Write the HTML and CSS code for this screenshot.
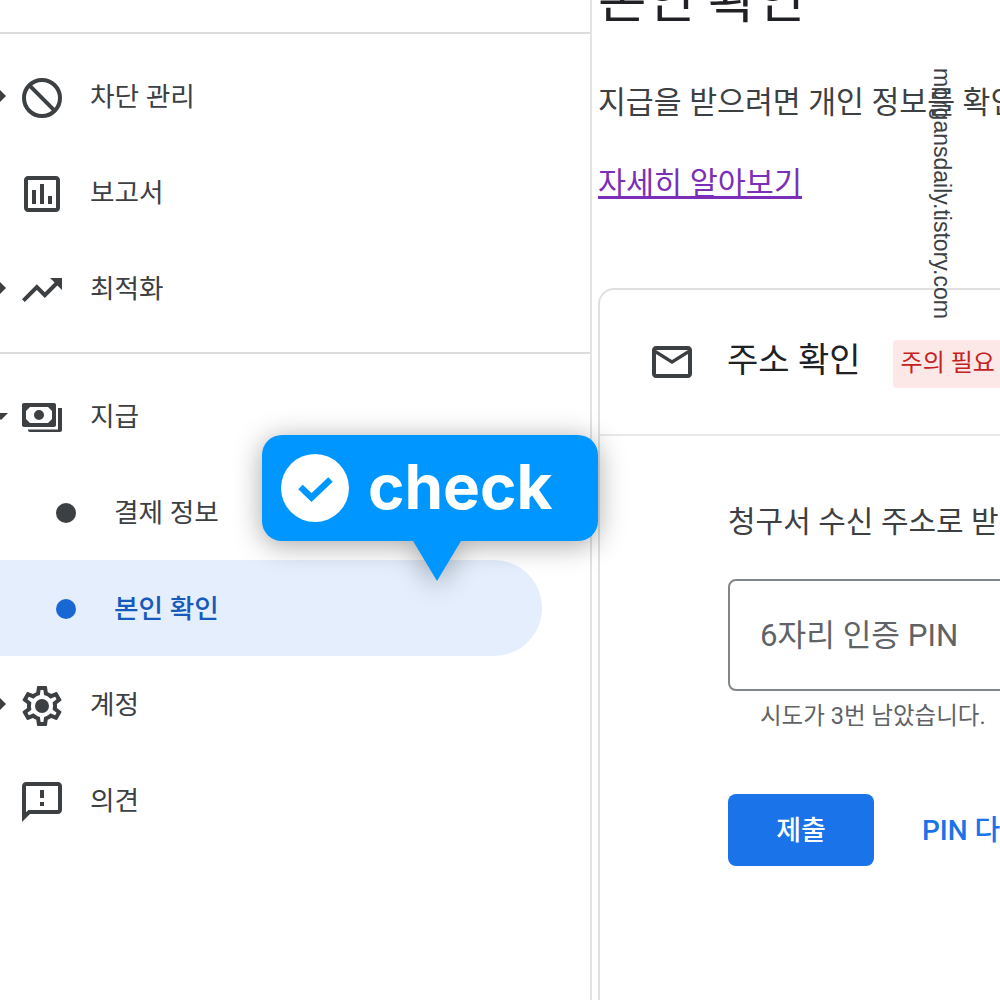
FILE: index.html
```html
<!DOCTYPE html>
<html lang="ko">
<head>
<meta charset="utf-8">
<title>본인 확인</title>
<link rel="stylesheet" href="styles.css">
</head>
<body>
<div class="page">
  <nav class="sidebar">
    <hr class="divider">
    <ul class="group">
      <li class="row"><span class="arrow right"></span>
        <svg class="icon" viewBox="0 0 24 24"><circle cx="12" cy="12" r="9" fill="none" stroke="#3c4043" stroke-width="2"/><path d="M5.6 5.6l12.8 12.8" stroke="#3c4043" stroke-width="2"/></svg>
        <span class="label">차단 관리</span></li>
      <li class="row"><span class="arrow"></span>
        <svg class="icon" viewBox="0 0 24 24"><path d="M19 3H5c-1.1 0-2 .9-2 2v14c0 1.1.9 2 2 2h14c1.1 0 2-.9 2-2V5c0-1.1-.9-2-2-2zm0 16H5V5h14v14zM7 10h2v7H7zm4-3h2v10h-2zm4 6h2v4h-2z"/></svg>
        <span class="label">보고서</span></li>
      <li class="row"><span class="arrow right"></span>
        <svg class="icon" viewBox="0 0 24 24"><path d="M16 6l2.29 2.29-4.88 4.88-4-4L2 16.59 3.41 18l6-6 4 4 6.3-6.29L22 12V6z"/></svg>
        <span class="label">최적화</span></li>
    </ul>
    <hr class="divider">
    <ul class="group">
      <li class="row"><span class="arrow down"></span>
        <svg class="icon" viewBox="0 0 24 24"><path fill-rule="evenodd" d="M3 4.5h15c.6 0 1 .4 1 1v10c0 .6-.4 1-1 1H3c-.6 0-1-.4-1-1v-10c0-.6.4-1 1-1zM6 6.5L4 8.5v4l2 2h9l2-2v-4l-2-2zM10.5 8a2.5 2.5 0 1 1 0 5 2.5 2.5 0 0 1 0-5z"/><path d="M20 7h2v11c0 .6-.4 1-1 1H6c-.6 0-1-.4-1-1v-.2h15z"/></svg>
        <span class="label">지급</span></li>
      <li class="row sub"><span class="dot"></span><span class="label">결제 정보</span></li>
      <li class="row sub active"><span class="dot"></span><span class="label">본인 확인</span></li>
      <li class="row"><span class="arrow right"></span>
        <svg class="icon" viewBox="0 0 24 24"><path d="M19.43 12.98c.04-.32.07-.64.07-.98 0-.34-.03-.66-.07-.98l2.11-1.65c.19-.15.24-.42.12-.64l-2-3.46c-.09-.16-.26-.25-.44-.25-.06 0-.12.01-.17.03l-2.49 1c-.52-.4-1.08-.73-1.69-.98l-.38-2.65C14.46 2.18 14.25 2 14 2h-4c-.25 0-.46.18-.49.42l-.38 2.65c-.61.25-1.17.59-1.69.98l-2.49-1c-.06-.02-.12-.03-.18-.03-.17 0-.34.09-.43.25l-2 3.46c-.13.22-.07.49.12.64l2.11 1.65c-.04.32-.07.65-.07.98 0 .33.03.66.07.98l-2.11 1.65c-.19.15-.24.42-.12.64l2 3.46c.09.16.26.25.44.25.06 0 .12-.01.17-.03l2.49-1c.52.4 1.08.73 1.69.98l.38 2.65c.03.24.24.42.49.42h4c.25 0 .46-.18.49-.42l.38-2.65c.61-.25 1.17-.59 1.69-.98l2.49 1c.06.02.12.03.18.03.17 0 .34-.09.43-.25l2-3.46c.12-.22.07-.49-.12-.64l-2.11-1.65zm-1.98-1.71c.04.31.05.52.05.73 0 .21-.02.43-.05.73l-.14 1.13.89.7 1.08.84-.7 1.21-1.27-.51-1.04-.42-.9.68c-.43.32-.84.56-1.25.73l-1.06.43-.16 1.13-.2 1.35h-1.4l-.19-1.35-.16-1.13-1.06-.43c-.43-.18-.83-.41-1.23-.71l-.91-.7-1.06.43-1.27.51-.7-1.21 1.08-.84.89-.7-.14-1.13c-.03-.31-.05-.54-.05-.74s.02-.43.05-.73l.14-1.13-.89-.7-1.08-.84.7-1.21 1.27.51 1.04.42.9-.68c.43-.32.84-.56 1.25-.73l1.06-.43.16-1.13.2-1.35h1.39l.19 1.35.16 1.13 1.06.43c.43.18.83.41 1.23.71l.91.7 1.06-.43 1.27-.51.7 1.21-1.07.85-.89.7.14 1.13z"/><circle cx="12" cy="12" r="3.5"/></svg>
        <span class="label">계정</span></li>
      <li class="row"><span class="arrow"></span>
        <svg class="icon" viewBox="0 0 24 24"><path d="M20 2H4c-1.1 0-1.99.9-1.99 2L2 22l4-4h14c1.1 0 2-.9 2-2V4c0-1.1-.9-2-2-2zm0 14H5.17L4 17.17V4h16v12zm-9-4h2v2h-2zm0-6h2v4h-2z"/></svg>
        <span class="label">의견</span></li>
    </ul>
  </nav>

  <main class="content">
    <h1 class="title">본인 확인</h1>
    <p class="lead">지급을 받으려면 개인 정보를 확인해야 합니다.</p>
    <a class="more" href="#">자세히 알아보기</a>
    <section class="card">
      <header class="card-head">
        <svg class="icon" viewBox="0 0 24 24"><path d="M20 4H4c-1.1 0-1.99.9-1.99 2L2 18c0 1.1.9 2 2 2h16c1.1 0 2-.9 2-2V6c0-1.1-.9-2-2-2zm0 14H4V8l8 5 8-5v10zm-8-7L4 6h16l-8 5z"/></svg>
        <h2 class="card-title">주소 확인</h2>
        <span class="badge">주의 필요</span>
      </header>
      <div class="card-body">
        <p class="prompt">청구서 수신 주소로 받은 PIN을 입력하세요.</p>
        <div class="field">6자리 인증 PIN</div>
        <p class="hint">시도가 3번 남았습니다.</p>
        <div class="actions">
          <button class="submit" type="button">제출</button>
          <button class="resend" type="button">PIN 다시 전송</button>
        </div>
      </div>
    </section>
  </main>
</div>

<div class="callout">
  <svg class="callout-icon" viewBox="0 0 68 68"><circle cx="34" cy="34" r="34" fill="#fff"/><path d="M19.5 33l11 10.5 19-18" fill="none" stroke="#0096ff" stroke-width="6.5"/></svg>
  <span class="callout-text">check</span>
</div>
<div class="watermark">morgansdaily.tistory.com</div>
</body>
</html>
```
FILE: styles.css
```css
* { box-sizing: border-box; }
html, body { margin: 0; height: 100%; overflow: hidden; background: #fff; }
body { font-family: Roboto, "Noto Sans CJK KR", sans-serif; color: #3c4043; }

.page { display: flex; height: 1000px; width: 1000px; overflow: hidden; }

.sidebar { flex: 0 0 592px; height: 1000px; padding-top: 32px; border-right: 2px solid #e3e3e3; }
.divider { margin: 0; border: 0; height: 2px; background: #dcdcdc; }
.group { list-style: none; margin: 0; padding: 14px 0; }
.group + .divider { margin-top: 2px; }
.row { display: flex; align-items: center; height: 96px; font-size: 26.7px; color: #3c4043; white-space: nowrap; }
.label { margin-bottom: 4px; }
.arrow { flex: 0 0 18px; width: 18px; height: 16px; position: relative; overflow: hidden; }
.arrow.right::before { content: ""; position: absolute; left: -2px; top: 0; width: 0; height: 0; border-left: 8px solid #3c4043; border-top: 8px solid transparent; border-bottom: 8px solid transparent; }
.arrow.down::before { content: ""; position: absolute; left: -6px; top: 5px; width: 0; height: 0; border-top: 7px solid #3c4043; border-left: 7px solid transparent; border-right: 7px solid transparent; }
.icon { flex: 0 0 48px; width: 48px; height: 48px; fill: #3c4043; margin-right: 24px; }
.row .icon { margin-top: 4px; }

.sub { padding-left: 56px; width: 542px; }
.dot { width: 20px; height: 20px; border-radius: 50%; background: #3c4043; margin-right: 38px; margin-top: 2px; }
.active { background: #e4eefc; color: #185abc; font-weight: 500; border-radius: 0 48px 48px 0; }
.active .dot { background: #1967d2; }

.content { flex: 1; min-width: 0; height: 1000px; overflow: hidden; padding-left: 6px; }
.title { margin: -28px 0 0; font-size: 52.7px; line-height: 56px; font-weight: 400; color: #202124; white-space: nowrap; }
.lead { margin: 51px 0 0; font-size: 30.3px; line-height: 48px; color: #3c4043; white-space: nowrap; }
.more { display: inline-block; margin-top: 33px; font-size: 30.5px; line-height: 48px; color: #7b2fb8; white-space: nowrap; }

.card { width: 700px; margin-top: 80px; border: 2px solid #e0e0e0; border-radius: 16px; height: 800px; }
.card-head { display: flex; align-items: center; height: 146px; padding-left: 48px; border-bottom: 2px solid #e8e8e8; }
.card-head .icon { margin-right: 31px; }
.card-title { margin: 0 32px 10px 0; font-size: 34px; font-weight: 400; color: #202124; }
.badge { display: block; margin-top: 4px; padding: 0 8px; height: 48px; line-height: 46px; border-radius: 4px; background: #fce8e6; color: #c5221f; font-size: 24px; white-space: nowrap; }

.card-body { padding: 66px 0 0 128px; }
.prompt { margin: 0; font-size: 30px; line-height: 40px; color: #3c4043; white-space: nowrap; }
.field { margin-top: 37px; height: 112px; border: 2px solid #80868b; border-radius: 8px; padding: 0 30px; line-height: 110px; font-size: 31.2px; color: #5f6368; }
.hint { margin: 7px 0 0 32px; font-size: 23.5px; line-height: 36px; color: #5f6368; white-space: nowrap; }
.actions { display: flex; align-items: center; margin-top: 60px; gap: 48px; }
.submit { width: 146px; height: 72px; border: 0; border-radius: 8px; background: #1a73e8; color: #fff; font: 500 27px Roboto, "Noto Sans CJK KR", sans-serif; padding: 0 0 4px; }
.resend { border: 0; background: none; padding: 0 0 4px; color: #1a73e8; font: 500 28px Roboto, "Noto Sans CJK KR", sans-serif; white-space: nowrap; }

.callout { position: absolute; left: 262px; top: 435px; width: 336px; height: 106px; display: flex; align-items: center; padding-left: 19px; gap: 19px; background: #0096ff; border-radius: 20px; filter: drop-shadow(0 4px 14px rgba(0,0,0,.35)); }
.callout::after { content: ""; position: absolute; left: 151px; top: 106px; width: 0; height: 0; border-top: 40px solid #0096ff; border-left: 24px solid transparent; border-right: 24px solid transparent; }
.callout-icon { width: 68px; height: 68px; flex: none; }
.callout-text { font: 700 62px/1 Inter, sans-serif; color: #fff; margin-bottom: 2px; }

.watermark { position: absolute; left: 929px; top: 68px; writing-mode: vertical-rl; font: 400 23px/26px "Liberation Sans", sans-serif; color: #3c4043; white-space: nowrap; }
```
